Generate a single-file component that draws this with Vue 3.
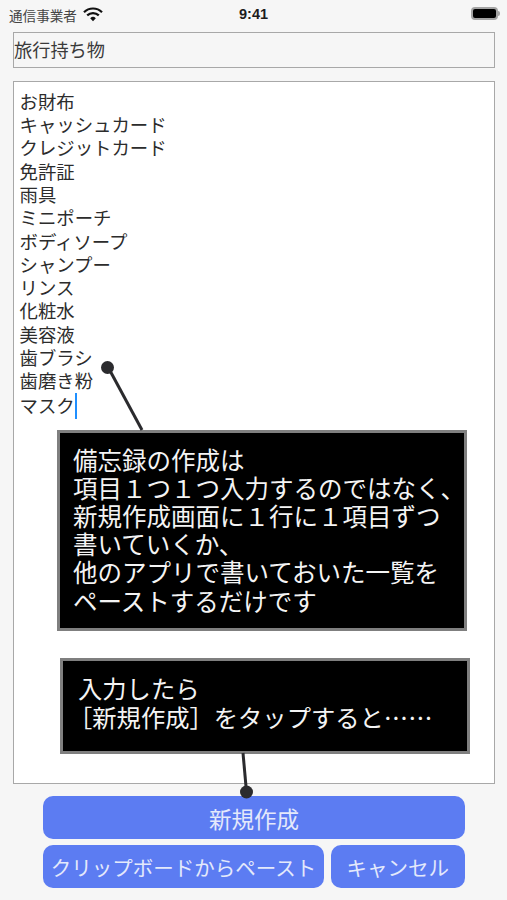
<script setup>
const title = '旅行持ち物'
const lines = ['お財布','キャッシュカード','クレジットカード','免許証','雨具','ミニポーチ','ボディソープ','シャンプー','リンス','化粧水','美容液','歯ブラシ','歯磨き粉']
const note1 = ['備忘録の作成は','項目１つ１つ入力するのではなく、','新規作成画面に１行に１項目ずつ','書いていくか、','他のアプリで書いておいた一覧を','ペーストするだけです']
</script>

<template>
  <div class="screen">
    <header class="status">
      <div class="left">
        <span class="carrier">通信事業者</span>
        <svg class="wifi" width="20" height="15" viewBox="0 0 20 15">
          <path d="M1 5.2a12.8 12.8 0 0 1 18 0" fill="none" stroke="#111" stroke-width="2.2"/>
          <path d="M4.2 8.4a8.3 8.3 0 0 1 11.6 0" fill="none" stroke="#111" stroke-width="2.2"/>
          <path d="M7.2 11.2a4 4 0 0 1 5.6 0L10 14.2z" fill="#111"/>
        </svg>
      </div>
      <span class="time">9:41</span>
      <div class="battery"><span class="cell"></span><span class="nub"></span></div>
    </header>

    <div class="title-field">{{ title }}</div>

    <div class="memo">
      <div class="memo-text">
        <div v-for="l in lines" :key="l" class="line">{{ l }}</div>
        <div class="line">マスク<span class="caret"></span></div>
      </div>

      <div class="note note-one">
        <div v-for="l in note1" :key="l">{{ l }}</div>
      </div>
      <div class="note note-two">
        <div>入力したら</div>
        <div><span class="open-bracket">［</span>新規作成］をタップすると……</div>
      </div>
    </div>

    <div class="actions">
      <button class="btn main">新規作成</button>
      <div class="row">
        <button class="btn paste">クリップボードからペースト</button>
        <button class="btn cancel">キャンセル</button>
      </div>
    </div>

    <svg class="leaders" width="507" height="900" viewBox="0 0 507 900">
      <line x1="108" y1="367" x2="142" y2="430" stroke="#2b2b2e" stroke-width="3"/>
      <circle cx="107.500" cy="367.500" r="6.500" fill="#2b2b2e"/>
      <line x1="243" y1="753" x2="246.500" y2="792" stroke="#2b2b2e" stroke-width="3"/>
      <circle cx="246.500" cy="792" r="6.500" fill="#2b2b2e"/>
    </svg>
  </div>
</template>

<style scoped>
.screen {
  position: relative;
  width: 507px;
  height: 900px;
  box-sizing: border-box;
  padding: 0 12px 0 13px;
  background: #f6f6f6;
  font-family: "Noto Sans CJK JP", "Noto Sans", sans-serif;
  color: #2a2a2a;
  overflow: hidden;
}
.status {
  position: relative;
  height: 32px;
  margin: 0 -12px 0 -13px;
  padding: 0 7px 0 9px;
  display: flex;
  align-items: center;
  justify-content: space-between;
}
.left { display: flex; align-items: center; gap: 6px; margin-top: -3px; }
.carrier { font-size: 13.600px; color: #444; line-height: 16px; }
.wifi { display: block; }
.time {
  position: absolute;
  left: 239px;
  top: 5px;
  font: 700 14.500px/18px "Liberation Sans", sans-serif;
  color: #1c1c1c;
}
.battery { display: flex; align-items: center; margin-top: -6px; }
.cell {
  display: block;
  width: 23px;
  height: 9px;
  background: #000;
  border: 2px solid #a3a3a3;
  border-radius: 4px;
}
.nub { width: 2px; height: 5px; background: #a3a3a3; border-radius: 0 2px 2px 0; }
.title-field {
  box-sizing: border-box;
  height: 36px;
  border: 1.500px solid #a8a8a8;
  font-size: 18.200px;
  line-height: 33px;
  color: #3a3a3a;
}
.memo {
  position: relative;
  box-sizing: border-box;
  height: 703px;
  margin-top: 13px;
  border: 1.500px solid #a8a8a8;
  background: #fff;
}
.memo-text { padding: 7.800px 0 0 5.500px; }
.line {
  font-size: 18.400px;
  line-height: 23.300px;
  height: 23.300px;
  color: #2c2c2c;
  white-space: nowrap;
}
.caret {
  display: inline-block;
  width: 2.500px;
  height: 26px;
  background: #1f8fff;
  vertical-align: -6px;
}
.note {
  position: absolute;
  box-sizing: border-box;
  background: #000;
  border: 3.500px solid #7f7f7f;
  color: #f4f4f4;
  white-space: nowrap;
}
.note-one {
  left: 43px;
  top: 348px;
  width: 410px;
  height: 201px;
  padding: 12.500px 0 0 13px;
  font-size: 24.500px;
  line-height: 28.200px;
}
.note-two {
  left: 46px;
  top: 576px;
  width: 410px;
  height: 96px;
  padding: 12px 0 0 15px;
  font-size: 24.300px;
  line-height: 29px;
}
.open-bracket { margin-left: -10px; }
.actions {
  margin: 12px 30px 0;
  display: flex;
  flex-direction: column;
  gap: 6px;
}
.row { display: flex; gap: 6.500px; }
.btn {
  display: block;
  box-sizing: border-box;
  height: 43px;
  width: 100%;
  padding: 0;
  border: none;
  border-radius: 10px;
  background: #5c7cf2;
  color: #e4e9fb;
  font-family: inherit;
  font-size: 20.500px;
  white-space: nowrap;
  text-align: center;
}
.main { font-size: 22.500px; }
.paste { flex: 0 0 281px; width: 281px; }
.cancel { flex: 1 1 0; min-width: 0; }
.leaders { position: absolute; left: 0; top: 0; pointer-events: none; }
</style>
